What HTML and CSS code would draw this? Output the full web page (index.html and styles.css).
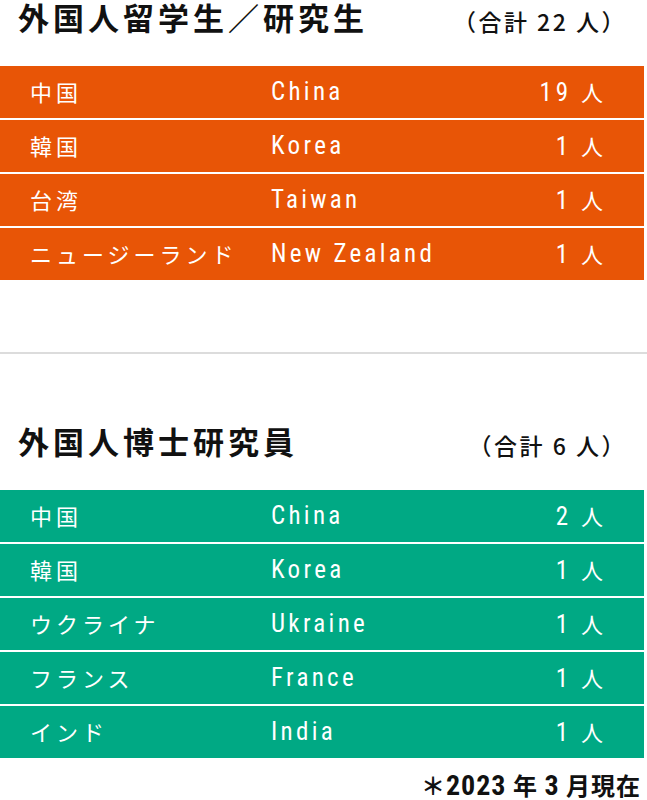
FILE: index.html
```html
<!DOCTYPE html>
<html lang="ja">
<head>
<meta charset="utf-8">
<link rel="stylesheet" href="styles.css">
</head>
<body>
<section class="block first">
  <header class="head">
    <h2 class="title">外国人留学生／研究生</h2>
    <span class="total">（合計 22 人）</span>
  </header>
  <div class="table orange">
    <div class="row"><span class="jp">中国</span><span class="en">China</span><span class="num"><span class="lat">19</span> 人</span></div>
    <div class="row"><span class="jp">韓国</span><span class="en">Korea</span><span class="num"><span class="lat">1</span> 人</span></div>
    <div class="row"><span class="jp">台湾</span><span class="en">Taiwan</span><span class="num"><span class="lat">1</span> 人</span></div>
    <div class="row"><span class="jp">ニュージーランド</span><span class="en">New Zealand</span><span class="num"><span class="lat">1</span> 人</span></div>
  </div>
</section>
<hr class="divider">
<section class="block second">
  <header class="head">
    <h2 class="title">外国人博士研究員</h2>
    <span class="total">（合計 6 人）</span>
  </header>
  <div class="table green">
    <div class="row"><span class="jp">中国</span><span class="en">China</span><span class="num"><span class="lat">2</span> 人</span></div>
    <div class="row"><span class="jp">韓国</span><span class="en">Korea</span><span class="num"><span class="lat">1</span> 人</span></div>
    <div class="row"><span class="jp">ウクライナ</span><span class="en">Ukraine</span><span class="num"><span class="lat">1</span> 人</span></div>
    <div class="row"><span class="jp">フランス</span><span class="en">France</span><span class="num"><span class="lat">1</span> 人</span></div>
    <div class="row"><span class="jp">インド</span><span class="en">India</span><span class="num"><span class="lat">1</span> 人</span></div>
  </div>
  <p class="note">＊<span class="lat">2023</span> 年 <span class="lat">3</span> 月現在</p>
</section>
</body>
</html>
```

FILE: styles.css
```css
html, body {
  margin: 0;
  padding: 0;
  background: #fff;
}
body {
  width: 647px;
  font-family: "Noto Sans CJK JP", "Noto Sans", sans-serif;
  color: #111;
}
.lat, .en {
  font-family: Roboto, "Noto Sans CJK JP", sans-serif;
  font-stretch: 80%;
}
.head {
  display: flex;
  justify-content: space-between;
  align-items: center;
  height: 34px;
  padding: 0 20px 0 18px;
}
.title {
  margin: 0;
  font-size: 31px;
  font-weight: 700;
  letter-spacing: 4px;
  line-height: 34px;
  white-space: nowrap;
}
.total {
  font-size: 23px;
  font-weight: 500;
  letter-spacing: 2.5px;
  white-space: nowrap;
  margin-top: 8px;
}
.table {
  margin-top: 32px;
  width: 644px;
  display: flex;
  flex-direction: column;
  gap: 2px;
}
.row {
  display: grid;
  grid-template-columns: 241px 1fr auto;
  align-items: center;
  height: 52px;
  padding: 0 37px 0 30px;
  color: #fff;
  font-size: 22px;
  line-height: 30px;
  letter-spacing: 4px;
}
.row .jp {
  margin-top: -2px;
}
.row .en {
  font-size: 25px;
  font-weight: 400;
  letter-spacing: 3.3px;
}
.row .num .lat {
  font-size: 25px;
  font-weight: 400;
}
.orange .row { background: #e85506; }
.green .row { background: #00a984; }
.num { text-align: right; }
.divider {
  margin: 72px 0 0;
  border: 0;
  height: 2px;
  background: #dcdcdc;
}
.second { padding-top: 70px; }
.note {
  margin: 12px 0 0;
  text-align: right;
  padding-right: 6px;
  font-size: 24px;
  line-height: 30px;
  font-weight: 700;
  letter-spacing: 1px;
}
.note .lat {
  font-size: 28px;
}
```
